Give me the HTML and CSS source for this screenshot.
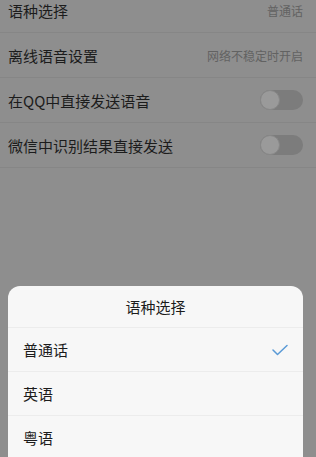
FILE: index.html
```html
<!DOCTYPE html>
<html lang="zh">
<head>
<meta charset="utf-8">
<link rel="stylesheet" href="styles.css">
</head>
<body>
<div class="page">
  <div class="list">
    <div class="row"><span class="label">语种选择</span><span class="value">普通话</span></div>
    <div class="row"><span class="label">离线语音设置</span><span class="value">网络不稳定时开启</span></div>
    <div class="row"><span class="label">在QQ中直接发送语音</span><span class="toggle"><span class="knob"></span></span></div>
    <div class="row"><span class="label">微信中识别结果直接发送</span><span class="toggle"><span class="knob"></span></span></div>
  </div>
  <div class="sheet">
    <div class="sheet-title">语种选择</div>
    <div class="option"><span>普通话</span>
      <svg class="check" width="16" height="12" viewBox="0 0 16 12"><polyline points="1,6 5.5,10.5 15,1.5" fill="none" stroke="#5a9ad6" stroke-width="1.5" stroke-linecap="round" stroke-linejoin="round"/></svg>
    </div>
    <div class="option"><span>英语</span></div>
    <div class="option"><span>粤语</span></div>
  </div>
</div>
</body>
</html>
```
FILE: styles.css
```css
html, body {
  margin: 0;
  padding: 0;
}
body {
  background: #8e8e8e;
  font-family: "Noto Sans CJK SC", "Noto Sans", sans-serif;
  width: 316px;
  height: 457px;
  overflow: hidden;
}
.page {
  position: relative;
  width: 316px;
  height: 457px;
  overflow: hidden;
}
.list {
  margin-top: -12px;
}
.row {
  height: 44px;
  border-bottom: 1px solid #868686;
  display: flex;
  align-items: center;
  justify-content: space-between;
  padding: 0 13px 0 8px;
}
.label {
  font-size: 15px;
  color: #1c1c1c;
}
.value {
  font-size: 12px;
  color: #626262;
}
.toggle {
  width: 43px;
  height: 20px;
  border-radius: 10px;
  background: #7c7c7c;
  display: flex;
  align-items: center;
}
.knob {
  width: 20px;
  height: 20px;
  box-sizing: border-box;
  border-radius: 50%;
  background: #9a9a9a;
  border: 1px solid #878787;
}
.sheet {
  position: absolute;
  left: 8px;
  right: 13px;
  top: 286px;
  bottom: 0;
  background: #f7f7f7;
  border-radius: 12px 12px 0 0;
}
.sheet-title {
  height: 41px;
  border-bottom: 1px solid #ececec;
  display: flex;
  align-items: center;
  justify-content: center;
  font-size: 15px;
  color: #1c1c1c;
}
.option {
  height: 43px;
  border-bottom: 1px solid #ececec;
  display: flex;
  align-items: center;
  justify-content: space-between;
  padding: 0 15px;
  font-size: 15px;
  color: #1c1c1c;
}
.check {
  display: block;
}
```
